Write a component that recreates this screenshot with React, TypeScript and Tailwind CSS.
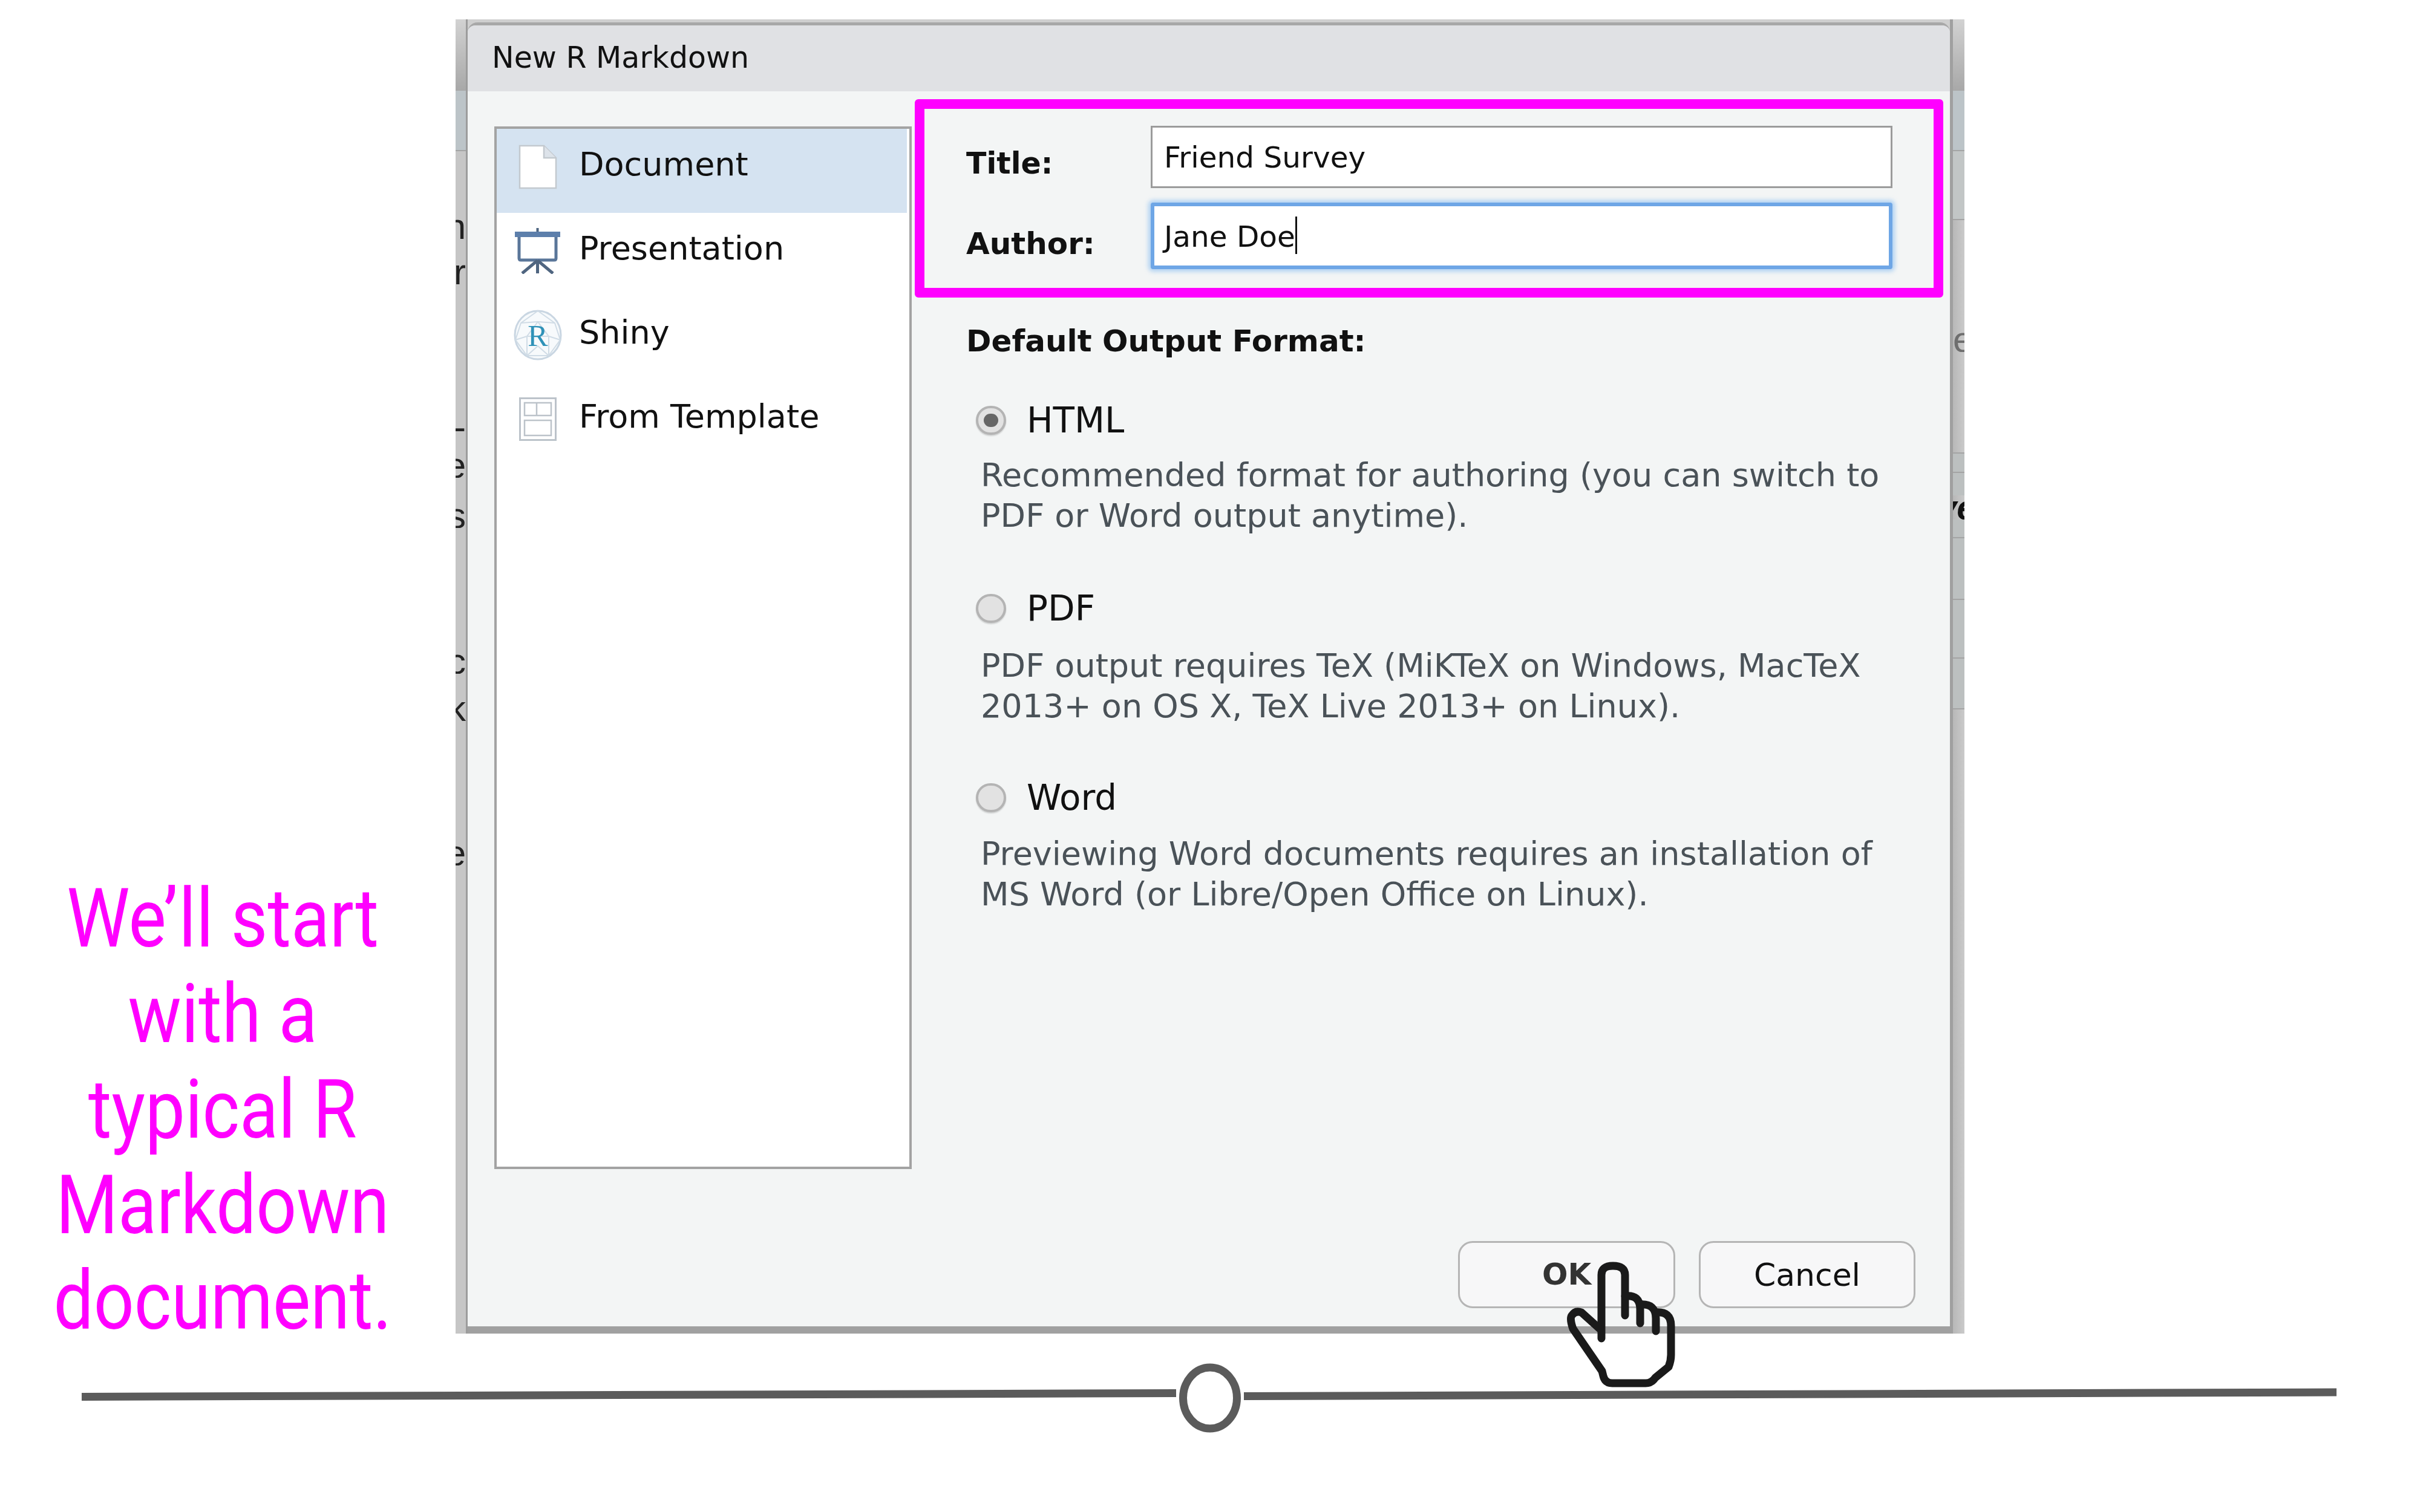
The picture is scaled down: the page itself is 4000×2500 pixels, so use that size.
import React from "react";

const sans = "font-['DejaVu_Sans',sans-serif]";

function DocIcon() {
  return (
    <svg width="64" height="74" viewBox="0 0 64 74" fill="none">
      <path d="M2 2H42L62 22V72H2Z" fill="#ffffff" stroke="#c3c9cf" strokeWidth="2.5" />
      <path d="M42 2V22H62" fill="#dde3ea" stroke="#c3c9cf" strokeWidth="2.5" />
    </svg>
  );
}

function PresentationIcon() {
  return (
    <svg width="76" height="76" viewBox="0 0 76 76" fill="none">
      <path d="M37.5 0V8" stroke="#4d6480" strokeWidth="4" />
      <rect x="0" y="6" width="75" height="9" fill="#5d7fab" />
      <path d="M7 15V50Q7 53 10 53H65Q68 53 68 50V15" fill="#ffffff" stroke="#5a7699" strokeWidth="5" />
      <path d="M37.5 53V75M37 54L12 75M38 54L63 75" stroke="#4f6580" strokeWidth="5" />
    </svg>
  );
}

function ShinyIcon() {
  return (
    <svg width="80" height="84" viewBox="0 0 80 84" fill="none">
      <ellipse cx="40" cy="42" rx="38" ry="40" fill="#f7fafc" stroke="#c9d6e2" strokeWidth="3" />
      <path d="M40 2L12 22L3 50L22 76L58 76L77 50L68 22ZM12 22L40 20L68 22M40 20L22 44L22 76M40 20L58 44L58 76M22 44H58M3 50L22 44M77 50L58 44M22 76L40 60L58 76" stroke="#d0dce6" strokeWidth="2" />
      <text x="40" y="60" textAnchor="middle" fontFamily="'Liberation Serif', serif" fontSize="50" fill="#2f92b8">R</text>
    </svg>
  );
}

function TemplateIcon() {
  return (
    <svg width="62" height="72" viewBox="0 0 62 72" fill="none">
      <rect x="1.5" y="1.5" width="59" height="69" fill="#ffffff" stroke="#bcc3ca" strokeWidth="3" />
      <rect x="9" y="9" width="44" height="21" stroke="#bcc3ca" strokeWidth="2.5" />
      <path d="M29 9V30" stroke="#bcc3ca" strokeWidth="2.5" />
      <rect x="9" y="38" width="44" height="25" stroke="#bcc3ca" strokeWidth="2.5" />
    </svg>
  );
}

function Hand() {
  return (
    <svg className="absolute left-[2580px] top-[2080px]" width="200" height="220" viewBox="0 0 200 220" fill="none" stroke="#1a1a1a" strokeWidth="13" strokeLinecap="round" strokeLinejoin="round">
      <path d="M67 133V28Q67 13 86 13Q106 13 106 28V95" />
      <path d="M106 63Q131 60 131 85V108" />
      <path d="M131 77Q157 75 157 100V121" />
      <path d="M157 90Q182 88 182 112V160Q182 170 178 180L156 198Q150 207 140 207H85Q73 207 70 195L68 187L20 117Q14 100 18 95Q24 86 34 90L64 117" />
    </svg>
  );
}

function Radio({ on }: { on?: boolean }) {
  return (
    <div className="w-[50px] h-[48px] rounded-full border-[4px] border-[#b4b4b4] bg-[#e2e2e2] flex items-center justify-center shrink-0 shadow-[0_2px_2px_rgba(0,0,0,0.15)]">
      {on && <div className="w-[24px] h-[22px] rounded-full bg-[#666666]" />}
    </div>
  );
}

function Format({ on, name, a, b, box }: { on?: boolean; name: string; a: string; b: string; box: string }) {
  return (
    <div className={box}>
      <div className="flex items-center h-[60px] pl-[16px]">
        <Radio on={on} />
        <span className="ml-[34px] text-[58px] leading-[60px] text-[#111111]">{name}</span>
      </div>
      <div className="pl-[24px] text-[54px] leading-[66.5px] text-[#4a5258] whitespace-nowrap">
        <div>{a}</div>
        <div>{b}</div>
      </div>
    </div>
  );
}

const items = [
  { label: "Document", icon: <DocIcon />, sel: true },
  { label: "Presentation", icon: <PresentationIcon /> },
  { label: "Shiny", icon: <ShinyIcon /> },
  { label: "From Template", icon: <TemplateIcon /> },
];

type Row = { h: number; t?: string; line?: boolean; tone?: string };

const leftRows: Row[] = [
  { h: 118, tone: "bg-gradient-to-b from-[#d2d2d2] to-[#a8a8a8]" },
  { h: 100, tone: "bg-[#bcc4c8]", line: true },
  { h: 105 },
  { h: 40, t: "n" },
  { h: 35 },
  { h: 40, t: "r" },
  { h: 226 },
  { h: 20, t: "-" },
  { h: 34 },
  { h: 40, t: "e" },
  { h: 43 },
  { h: 40, t: "s" },
  { h: 201 },
  { h: 40, t: "c" },
  { h: 38 },
  { h: 40, t: "k" },
  { h: 199 },
  { h: 40, t: "e" },
];

const rightRows: Row[] = [
  { h: 118, tone: "bg-gradient-to-b from-[#d2d2d2] to-[#a8a8a8]" },
  { h: 100, tone: "bg-[#bcc4c8]", line: true },
  { h: 114, tone: "bg-[#c2c6c6]", line: true },
  { h: 178 },
  { h: 40, t: "e" },
  { h: 168, line: true },
  { h: 32, tone: "bg-[#bcc0c0]", line: true },
  { h: 37, tone: "bg-[#bcc0c0]" },
  { h: 40, t: "ve" },
  { h: 31, tone: "bg-[#bcc0c0]", line: true },
  { h: 102, tone: "bg-[#bcc0c0]", line: true },
  { h: 97, tone: "bg-[#bcc0c0]", line: true },
  { h: 84, tone: "bg-[#bcc0c0]", line: true },
];

function Strip({ rows, side }: { rows: Row[]; side: "l" | "r" }) {
  return (
    <div
      className={
        side === "l"
          ? "w-[20px] shrink-0 flex flex-col overflow-hidden border-r-[3px] border-[#9c9c9c] bg-[#c6c6c6] font-['Liberation_Sans',sans-serif]"
          : "w-[24px] shrink-0 flex flex-col overflow-hidden border-l-[5px] border-[#a0a0a0] bg-gradient-to-r from-[#b8b8b8] to-[#cacaca] font-['Liberation_Sans',sans-serif]"
      }
    >
      {rows.map((r, i) => (
        <div
          key={i}
          style={{ height: r.h }}
          className={`shrink-0 flex items-center overflow-hidden ${side === "l" ? "justify-end" : "justify-start"} ${r.tone ?? ""} ${r.line ? "border-b-[2px] border-[#a4a4a4]" : ""}`}
        >
          {r.t && (
            <span
              className={
                r.t === "ve"
                  ? "text-[58px] leading-none font-bold italic text-[#111111] -ml-[26px]"
                  : side === "r"
                    ? "text-[60px] leading-none text-[#6e6e6e]"
                    : "text-[60px] leading-none text-[#222222]"
              }
            >
              {r.t}
            </span>
          )}
        </div>
      ))}
    </div>
  );
}

export default function App() {
  return (
    <div className={`relative w-[4000px] h-[2500px] bg-white overflow-hidden ${sans}`}>
      <div className="flex h-[2205px] pt-[32px]">
        <div className="w-[753px] shrink-0 flex flex-col items-center pr-[18px] pt-[1408px] text-[#ff00ff] font-['Roboto',sans-serif] text-[135px] leading-[158px] text-center">
          <div className="w-[740px] scale-x-[0.87]">
            We’ll start<br />with a<br />typical R<br />Markdown<br />document.
          </div>
        </div>
        <div className="w-[2494px] shrink-0 flex bg-[#cfcfcf]">
          <Strip rows={leftRows} side="l" />
          <div className="flex-1 mt-[5px] flex flex-col bg-[#f3f5f5] rounded-t-[16px] border-t-[5px] border-[#a8a8a8] border-b-[12px] border-b-[#a0a0a0] min-w-0">
            <div className="h-[109px] shrink-0 bg-[#e0e1e4] rounded-t-[12px] pl-[40px] text-[49px] leading-[108px] text-[#111111]">
              New R Markdown
            </div>
            <div className="flex-1 relative flex pl-[44px] pt-[58px]">
              <div className="w-[690px] h-[1724px] shrink-0 border-[4px] border-[#a3a3a3] bg-white">
                {items.map((it) => (
                  <div key={it.label} className={`h-[139px] mr-[4px] pb-[8px] flex items-center ${it.sel ? "bg-[#d5e3f1]" : ""}`}>
                    <div className="w-[136px] shrink-0 flex justify-center pb-[6px]">{it.icon}</div>
                    <span className="text-[54px] leading-none pb-[14px] text-[#111111]">{it.label}</span>
                  </div>
                ))}
              </div>
              <div className="flex-1 min-w-0 flex flex-col pl-[5px]">
                <div className="w-[1700px] h-[328px] -mt-[45px] border-[16px] border-[#ff00ff] rounded-[6px] pl-[69px] pt-[28px] shrink-0">
                  <div className="flex items-center h-[103px]">
                    <span className="w-[305px] font-bold text-[49px] pt-[22px] text-[#111111]">Title:</span>
                    <div className="w-[1226px] h-[103px] border-[3px] border-[#9b9b9b] bg-white pl-[19px] text-[48.5px] leading-[98px] text-[#111111]">Friend Survey</div>
                  </div>
                  <div className="flex items-center h-[110px] mt-[24px]">
                    <span className="w-[305px] font-bold text-[50px] pt-[26px] text-[#111111]">Author:</span>
                    <div className="w-[1226px] h-[110px] border-[6px] border-[#6ea6e6] rounded-[4px] shadow-[0_0_7px_4px_rgba(120,180,240,0.55)] bg-white pl-[16px] text-[48.5px] leading-[100px] text-[#111111] flex items-start">
                      <span>Jane Doe</span>
                      <span className="w-[3px] h-[62px] mt-[17px] bg-[#111111]" />
                    </div>
                  </div>
                </div>
                <div className="pl-[85px] pt-[42px]">
                  <div className="font-bold text-[50px] leading-[60px] text-[#111111] mb-[71px]">Default Output Format:</div>
                  <Format on name="HTML" a="Recommended format for authoring (you can switch to" b="PDF or Word output anytime)." box="flex flex-col gap-[28px] mb-[90px]" />
                  <Format name="PDF" a="PDF output requires TeX (MiKTeX on Windows, MacTeX" b="2013+ on OS X, TeX Live 2013+ on Linux)." box="flex flex-col gap-[32px] mb-[88px]" />
                  <Format name="Word" a="Previewing Word documents requires an installation of" b="MS Word (or Libre/Open Office on Linux)." box="flex flex-col gap-[30px]" />
                </div>
              </div>
              <div className="absolute right-[57px] bottom-[30px] flex gap-[39px]">
                <button className="w-[359px] h-[111px] rounded-[24px] border-[3px] border-[#b5b5b5] bg-[#f7f7f8] font-bold text-[50px] text-[#333333]">OK</button>
                <button className="w-[358px] h-[111px] rounded-[24px] border-[3px] border-[#b5b5b5] bg-[#f7f7f8] text-[52px] text-[#111111]">Cancel</button>
              </div>
            </div>
          </div>
          <Strip rows={rightRows} side="r" />
        </div>
      </div>
      <svg className="block" width="4000" height="200" viewBox="0 2205 4000 200" fill="none">
        <path d="M135 2309.5L1944 2303.5" stroke="#5b5b5b" strokeWidth="13" />
        <path d="M2056 2308.5L3862 2302" stroke="#5b5b5b" strokeWidth="13" />
        <ellipse cx="2000" cy="2311.5" rx="44.5" ry="50.5" stroke="#5b5b5b" strokeWidth="13" />
      </svg>
      <Hand />
    </div>
  );
}
